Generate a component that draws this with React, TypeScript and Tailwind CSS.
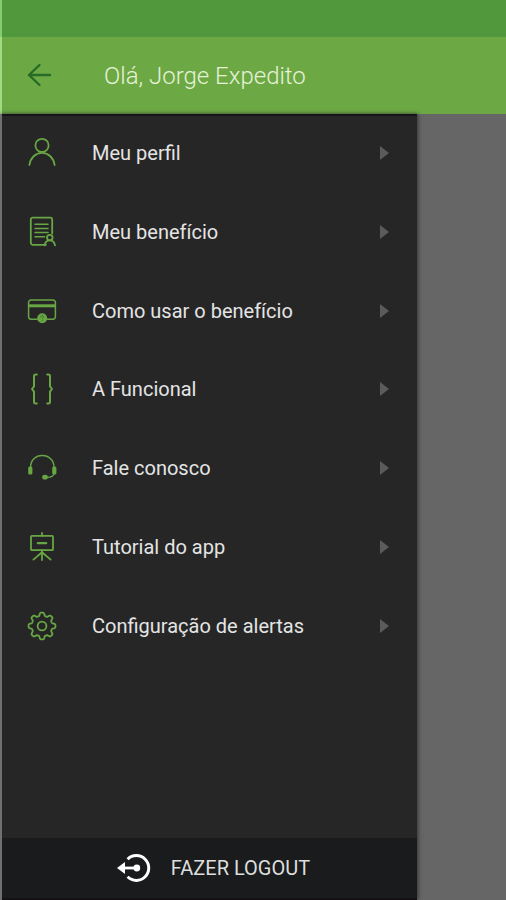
import React from 'react';

interface MenuItem {
    label: string;
    icon: React.ReactNode;
}

const Icon: React.FC<{ children: React.ReactNode }> = ({ children }) => (
    <svg
        viewBox="0 0 32 32"
        className="w-8 h-8 shrink-0"
        fill="none"
        stroke="#68a644"
        strokeWidth="1.8"
        strokeLinecap="round"
        strokeLinejoin="round"
        aria-hidden="true"
    >
        {children}
    </svg>
);

const ProfileIcon = () => (
    <Icon>
        <circle cx="16" cy="8.4" r="6.6" />
        <path d="M3.4 28C4.4 20.8 9.6 15.9 16 15.9S27.6 20.8 28.6 28" />
    </Icon>
);

const BenefitIcon = () => (
    <Icon>
        <path d="M20 28.8H6.8a2 2 0 0 1-2-2V3.6a2 2 0 0 1 2-2h17.4a2 2 0 0 1 2 2v14" />
        <path d="M9 8.2h13M9 12.4h13M9 16.6h13M9 20.8h9.6" strokeWidth="1.5" />
        <circle cx="23.8" cy="21.6" r="2.8" />
        <path d="M18.6 29.4c.5-3.2 2.6-5 5.2-5s4.7 1.8 5.2 5" />
    </Icon>
);

const CardIcon = () => (
    <Icon>
        <path d="M11 24.2H5A2.4 2.4 0 0 1 2.6 21.8V7.4A2.4 2.4 0 0 1 5 5h22a2.4 2.4 0 0 1 2.4 2.4v14.4a2.4 2.4 0 0 1-2.4 2.4h-5.5" strokeWidth="1.5" />
        <path d="M3 10.8h26" strokeWidth="3" strokeLinecap="butt" />
        <circle cx="16.2" cy="23.2" r="5" fill="#68a644" stroke="none" />
        <path d="M14.9 22c0-1.9 2.7-1.8 2.7-.1 0 1-1.3 1-1.3 2M16.3 25.6v.1" stroke="#3e7422" strokeWidth="1" />
    </Icon>
);

const BracesIcon = () => (
    <Icon>
        <path d="M10.8 1.6H9.6a1.6 1.6 0 0 0-1.6 1.6v10.2L6 16l2 2.6v10.2a1.6 1.6 0 0 0 1.6 1.6h1.2" strokeWidth="2" />
        <path d="M21.2 1.6h1.2A1.6 1.6 0 0 1 24 3.2v10.2l2 2.6-2 2.6v10.2a1.6 1.6 0 0 1-1.6 1.6h-1.2" strokeWidth="2" />
    </Icon>
);

const HeadsetIcon = () => (
    <Icon>
        <path d="M4.6 15C4.6 8.4 9.6 3.6 16.2 3.6S28 8.4 28 15" strokeWidth="1.5" />
        <path d="M28 21c0 2.8-2.8 4.4-7 4.4" strokeWidth="1.3" />
        <rect x="2.2" y="14.6" width="4.2" height="8" rx="1.5" fill="#68a644" stroke="none" />
        <rect x="26.2" y="14.6" width="4.2" height="8" rx="1.5" fill="#68a644" stroke="none" />
        <ellipse cx="19" cy="25.2" rx="2.8" ry="2.4" fill="#68a644" stroke="none" />
    </Icon>
);

const BoardIcon = () => (
    <Icon>
        <rect x="5" y="4.8" width="22" height="14.4" rx="1" />
        <path d="M16 2v2.8M16 19.2V29M16 21.2l-8.6 7.4M16 21.2l8.6 7.4" />
        <path d="M11.8 12.2h8.4" strokeWidth="2.2" />
    </Icon>
);

// eight rounded teeth around the hub
const gearPoints = Array.from({ length: 192 }, (_, i) => {
    const angle = (i / 192) * Math.PI * 2;
    const radius = 11.9 + 1.6 * Math.tanh(2.2 * Math.cos(8 * angle));
    return `${(16 + radius * Math.cos(angle)).toFixed(2)},${(16 + radius * Math.sin(angle)).toFixed(2)}`;
}).join(' ');

const GearIcon = () => (
    <Icon>
        <circle cx="16" cy="16" r="4.4" />
        <polygon points={gearPoints} />
    </Icon>
);

const LogoutIcon = () => (
    <svg viewBox="0 0 34 30" className="w-[34px] h-[30px] shrink-0" fill="none" stroke="#fff" strokeWidth="3" aria-hidden="true">
        <path d="M10.6 6.2A12.4 12.4 0 1 1 10.6 23.8" />
        <path d="M4 15h15" strokeWidth="2.8" />
        <path d="M0 15l8-6v12z" fill="#fff" stroke="none" />
        <circle cx="19.8" cy="15" r="3.4" fill="#fff" stroke="none" />
    </svg>
);

const items: MenuItem[] = [
    { label: 'Meu perfil', icon: <ProfileIcon /> },
    { label: 'Meu benefício', icon: <BenefitIcon /> },
    { label: 'Como usar o benefício', icon: <CardIcon /> },
    { label: 'A Funcional', icon: <BracesIcon /> },
    { label: 'Fale conosco', icon: <HeadsetIcon /> },
    { label: 'Tutorial do app', icon: <BoardIcon /> },
    { label: 'Configuração de alertas', icon: <GearIcon /> },
];

const App: React.FC = () => {
    return (
        <div className="min-h-screen flex flex-col bg-[#666666] font-[Roboto,sans-serif]">
            {/* status bar */}
            <div className="h-[37px] bg-[#51983c] border-l-2 border-[#82cd74]" />

            <header className="h-[77px] flex items-center pl-6 bg-[#6ca944] border-l-2 border-[#9edc80]">
                <button type="button" aria-label="Voltar" className="w-7 h-7 flex items-center justify-center">
                    <svg viewBox="0 0 28 28" className="w-7 h-7" fill="none" stroke="#266b26" strokeWidth="2.4" strokeLinecap="round" strokeLinejoin="round">
                        <path d="M24 13H3M13.5 3L3 13l10.5 10" />
                    </svg>
                </button>
                <h1 className="ml-[50px] text-2xl font-light text-[#e6f1d8]">Olá, Jorge Expedito</h1>
            </header>

            <div className="flex-1 flex">
                <nav className="flex-1 flex flex-col bg-[#262627] border-l-2 border-[#707070] shadow-[1px_0_4px_#333333]">
                    <div className="flex-1 shadow-[inset_0_2px_0_#17131a]">
                        <ul className="grid grid-rows-7 h-[551px]">
                            {items.map((item) => (
                                <li key={item.label} className="flex">
                                    <button type="button" className="flex-1 flex items-center pl-6 pr-7 text-left">
                                        {item.icon}
                                        <span className="ml-[34px] flex-1 text-xl text-[#e4e4e4]">{item.label}</span>
                                        <svg viewBox="0 0 9 14" className="w-[9px] h-[14px]" fill="#5b5b5b" aria-hidden="true">
                                            <path d="M0 0l9 7-9 7z" />
                                        </svg>
                                    </button>
                                </li>
                            ))}
                        </ul>
                    </div>
                    <button type="button" className="h-[62px] flex items-center justify-center gap-5 pl-2 bg-[#191b1c] border-b-2 border-[#151014] text-[#dedede] text-xl">
                        <LogoutIcon />
                        FAZER LOGOUT
                    </button>
                </nav>
                <div className="w-[89px]" />
            </div>
        </div>
    );
};

export default App;
